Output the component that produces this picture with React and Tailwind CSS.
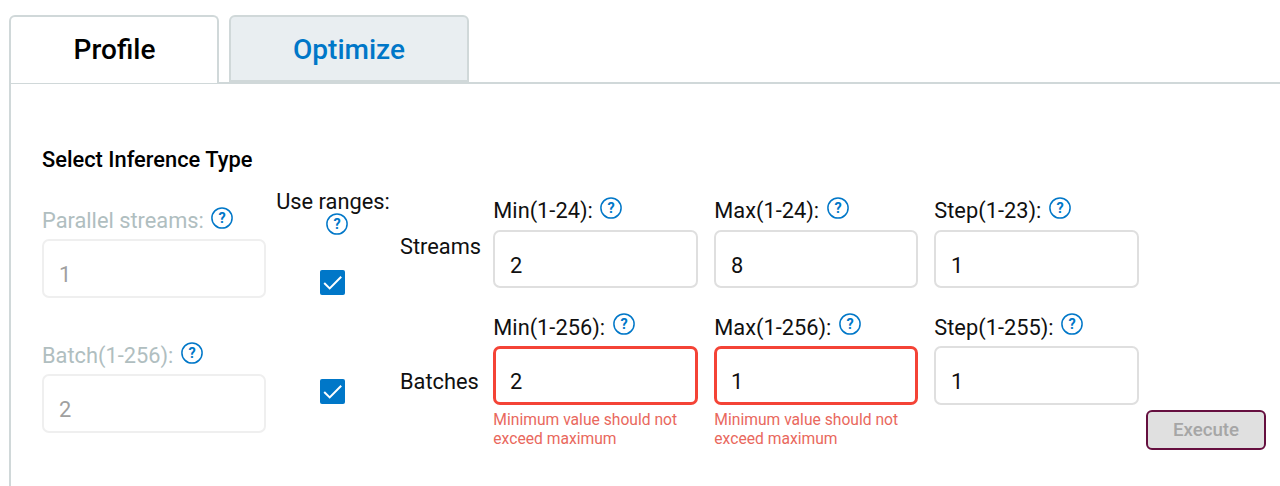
function Help() {
  return (
    <svg width="22" height="22" viewBox="0 0 22 22" className="shrink-0">
      <circle cx="11" cy="11" r="10.1" fill="none" stroke="#0077c8" strokeWidth="1.5" />
      <text x="11" y="16" textAnchor="middle" fill="#0077c8" className="text-[14.5px] font-bold">
        ?
      </text>
    </svg>
  );
}

function Label({ text, muted, leading = 'leading-[28px]' }) {
  return (
    <div className="flex h-[26px] items-start gap-[7.5px] whitespace-nowrap">
      <span className={muted ? 'leading-[28px] text-[#b0bec0]' : `pl-[0.3px] ${leading}`}>{text}</span>
      <Help />
    </div>
  );
}

const frames = {
  normal: 'mt-[7px] border-2 border-[#dfdfdf] px-[15px]',
  muted: 'mt-[6px] border-2 border-[#efefef] px-[15px] text-[#a0a0a0]',
  error: 'mt-[7px] border-3 border-[#f44336] px-[14px]',
};

function Field({ label, value, state = 'normal', error, className, leading, height = 'h-[59px] pt-[13px]' }) {
  return (
    <div className={className}>
      <Label text={label} muted={state === 'muted'} leading={leading} />
      <div className={`flex items-center rounded-[7px] ${height} ${frames[state]}`}>{value}</div>
      {error && (
        <p className="mt-[5px] pl-[0.3px] text-[15.65px] leading-[19px] text-[#e9685d]">
          Minimum value should not
          <br />
          exceed maximum
        </p>
      )}
    </div>
  );
}

function Checkbox() {
  return (
    <span className="flex h-[25px] w-[25px] items-center justify-center rounded-[2px] bg-[#0077c8]">
      <svg width="25" height="25" viewBox="0 0 25 25" fill="none" stroke="white" strokeWidth="2">
        <path d="M4.2 13 L9.7 18.4 L21.2 6.8" />
      </svg>
    </span>
  );
}

export default function App() {
  return (
    <div className="h-[486px] overflow-hidden bg-white pt-[15px] pl-[9px] font-['Roboto',sans-serif] text-[21.8px] text-[#101010]">
      <div className="flex h-[67px] gap-[10px] text-[28px] font-medium">
        <div className="z-10 -mb-px flex h-[68px] w-[210px] items-center justify-center rounded-t-[6px] border-2 border-b-0 border-[#d0d8d9] bg-white pl-px text-black">
          Profile
        </div>
        <div className="flex w-[240px] items-center justify-center rounded-t-[6px] border-2 border-[#d0d8d9] bg-[#e9eef1] pt-[2px] text-[#0077c8]">
          Optimize
        </div>
      </div>
      <div className="h-[404px] border-t-2 border-l-2 border-[#d0d8d9] pl-[31px]">
        <h2 className="h-[90px] pt-[61px] text-[21.85px] leading-[30px] font-medium text-black">
          Select Inference Type
        </h2>
        <div className="flex items-start">
          <div className="flex w-[224px] flex-col gap-[44px] pt-[33px]">
            <Field label="Parallel streams:" value="1" state="muted" />
            <Field label="Batch(1-256):" value="2" state="muted" />
          </div>
          <div className="ml-[10px] flex w-[114px] flex-col items-center pt-[15px]">
            <span className="leading-[25px] whitespace-nowrap">Use ranges:</span>
            <div className="-mt-px pl-[8px]">
              <Help />
            </div>
            <div className="mt-[35px] flex flex-col gap-[84px] pr-px">
              <Checkbox />
              <Checkbox />
            </div>
          </div>
          <div className="ml-[10px] flex w-[93px] flex-col gap-[105px] pt-[58px] leading-[30px]">
            <span>Streams</span>
            <span>Batches</span>
          </div>
          <div className="flex flex-col gap-[25px] pt-[23px]">
            <div className="flex gap-[16px]">
              <Field label="Min(1-24):" value="2" className="w-[205px]" height="h-[58px] pt-[14px]" />
              <Field label="Max(1-24):" value="8" className="w-[204px]" height="h-[58px] pt-[14px]" />
              <Field label="Step(1-23):" value="1" className="w-[205px]" height="h-[58px] pt-[14px]" />
            </div>
            <div className="flex gap-[16px]">
              <Field label="Min(1-256):" value="2" state="error" error className="w-[205px]" leading="leading-[30px]" />
              <Field label="Max(1-256):" value="1" state="error" error className="w-[204px]" leading="leading-[30px]" />
              <Field label="Step(1-255):" value="1" className="w-[205px]" leading="leading-[30px]" />
            </div>
          </div>
          <button className="mt-[236px] ml-[7px] h-[40px] w-[120px] rounded-[6px] border-2 border-[#650f3f] bg-[#e0e0e0] pt-px text-[18.7px] font-medium text-[#a6a6a6]">
            Execute
          </button>
        </div>
      </div>
    </div>
  );
}
